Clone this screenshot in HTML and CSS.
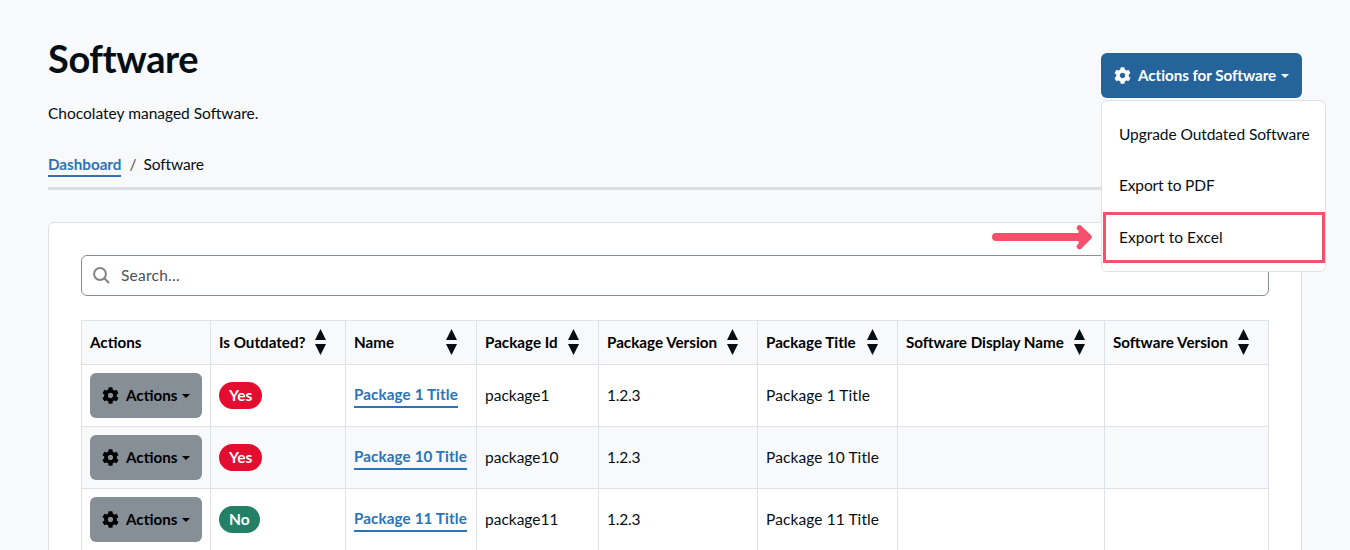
FILE: index.html
```html
<!DOCTYPE html>
<html lang="en">
<head>
<meta charset="utf-8">
<title>Software</title>
<link rel="stylesheet" href="styles.css">
</head>
<body>
<svg width="0" height="0" class="defs" aria-hidden="true">
  <symbol id="cog" viewBox="0 0 512 512"><path fill="currentColor" d="M487.4 315.7l-42.600-24.600c4.300-23.200 4.300-47 0-70.200l42.600-24.600c4.900-2.800 7.100-8.600 5.500-14-11.100-35.600-30-67.800-54.700-94.600-3.800-4.100-10-5.100-14.800-2.300L380.800 110c-17.900-15.400-38.500-27.300-60.800-35.100V25.800c0-5.600-3.900-10.500-9.400-11.700-36.700-8.200-74.300-7.800-109.200 0-5.500 1.200-9.400 6.100-9.400 11.700V75c-22.200 7.900-42.800 19.800-60.800 35.100L88.700 85.500c-4.900-2.800-11-1.900-14.800 2.300-24.700 26.700-43.600 58.900-54.700 94.600-1.700 5.400.6 11.200 5.500 14L67.300 221c-4.300 23.200-4.300 47 0 70.200l-42.600 24.600c-4.900 2.800-7.100 8.600-5.500 14 11.100 35.600 30 67.800 54.700 94.600 3.800 4.100 10 5.100 14.800 2.300l42.600-24.600c17.900 15.400 38.500 27.300 60.800 35.100v49.200c0 5.600 3.900 10.500 9.400 11.700 36.700 8.200 74.300 7.800 109.200 0 5.500-1.200 9.400-6.100 9.400-11.700v-49.200c22.200-7.900 42.800-19.800 60.800-35.100l42.600 24.600c4.900 2.800 11 1.900 14.800-2.300 24.700-26.700 43.600-58.900 54.700-94.600 1.500-5.500-.7-11.300-5.600-14.100zM256 336c-44.100 0-80-35.900-80-80s35.900-80 80-80 80 35.900 80 80-35.900 80-80 80z"/></symbol>
  <symbol id="sort" viewBox="0 0 11 26"><path d="M5.500 0 11 11H0zM0 15h11L5.500 26z" fill="#050e14"/></symbol>
</svg>
<main class="page">
  <header class="head">
    <div>
      <h1 class="title">Software</h1>
      <p class="lead">Chocolatey managed Software.</p>
    </div>
    <div class="dropdown">
      <button class="btn btn-primary"><svg class="cog"><use href="#cog"/></svg><span class="btn-label">Actions for Software</span><span class="caret"></span></button>
      <ul class="menu">
        <li class="item upgrade">Upgrade Outdated Software</li>
        <li class="item pdf">Export to PDF</li>
        <li class="item excel">Export to Excel</li>
      </ul>
      <svg class="arrow" viewBox="0 0 100 26"><path d="M4 13H94" stroke-width="8"/><path d="M87.500 4 97 13 87.500 22.500" stroke-width="5.500"/><path d="M88 8 95 13 88 18z" stroke-width="3" class="tip"/></svg>
    </div>
  </header>
  <nav class="crumbs"><a class="link" href="#">Dashboard</a><span class="slash">/</span><span class="here">Software</span></nav>
  <section class="card">
    <div class="search"><svg class="glass" viewBox="0 0 17 17"><circle cx="7" cy="7" r="5.900"/><path d="M11.300 11.300 16 16"/></svg><span class="hint">Search...</span></div>
    <table class="grid">
      <colgroup><col class="c1"><col class="c2"><col class="c3"><col class="c4"><col class="c5"><col class="c6"><col class="c7"><col class="c8"></colgroup>
      <thead><tr>
        <th>Actions</th>
        <th><div class="th">Is Outdated?<svg class="sort"><use href="#sort"/></svg></div></th>
        <th><div class="th">Name<svg class="sort"><use href="#sort"/></svg></div></th>
        <th><div class="th">Package Id<svg class="sort"><use href="#sort"/></svg></div></th>
        <th><div class="th">Package Version<svg class="sort"><use href="#sort"/></svg></div></th>
        <th><div class="th">Package Title<svg class="sort"><use href="#sort"/></svg></div></th>
        <th><div class="th">Software Display Name<svg class="sort"><use href="#sort"/></svg></div></th>
        <th><div class="th">Software Version<svg class="sort"><use href="#sort"/></svg></div></th>
      </tr></thead>
      <tbody>
        <tr><td><button class="btn btn-grey"><svg class="cog"><use href="#cog"/></svg><span class="btn-label">Actions</span><span class="caret"></span></button></td><td><span class="badge yes">Yes</span></td><td class="txt"><a class="link pkg" href="#">Package 1 Title</a></td><td class="txt">package1</td><td class="txt ver">1.2.3</td><td class="txt name">Package 1 Title</td><td></td><td></td></tr>
        <tr><td><button class="btn btn-grey"><svg class="cog"><use href="#cog"/></svg><span class="btn-label">Actions</span><span class="caret"></span></button></td><td><span class="badge yes">Yes</span></td><td class="txt"><a class="link pkg" href="#">Package 10 Title</a></td><td class="txt">package10</td><td class="txt ver">1.2.3</td><td class="txt name">Package 10 Title</td><td></td><td></td></tr>
        <tr><td><button class="btn btn-grey"><svg class="cog"><use href="#cog"/></svg><span class="btn-label">Actions</span><span class="caret"></span></button></td><td><span class="badge no">No</span></td><td class="txt"><a class="link pkg" href="#">Package 11 Title</a></td><td class="txt">package11</td><td class="txt ver">1.2.3</td><td class="txt name">Package 11 Title</td><td></td><td></td></tr>
      </tbody>
    </table>
  </section>
</main>
</body>
</html>
```
FILE: styles.css
```css
* { box-sizing: border-box; }
body { margin: 0; background: #f8f9fb; color: #050e14; font: 15.5px/24px Lato, "Noto Sans", sans-serif; }
.defs { position: absolute; }
.page { height: 550px; overflow: hidden; padding: 34px 48px 0; }
.head { display: flex; justify-content: space-between; height: 118px; }
.title { margin: 0; font-size: 38px; line-height: 48px; font-weight: 700; letter-spacing: -0.4px; }
.lead { margin: 19px 0 0; }
.dropdown { position: relative; width: 201px; padding-top: 19px; }
.btn { display: flex; align-items: center; height: 45px; border: 0; border-radius: 6px; font: 700 15.2px/24px Lato, "Noto Sans", sans-serif; white-space: nowrap; }
.btn-label { padding-bottom: 2px; }
.btn-primary { width: 201px; padding: 0 13px; background: #25639b; color: #fff; letter-spacing: -0.05px; }
.btn-grey { width: 112px; padding: 0 12px; background: #868e96; color: #000; }
.cog { width: 17px; height: 17px; margin-right: 7px; flex: none; }
.caret { margin-left: auto; border: 4px solid transparent; border-top-color: currentColor; border-bottom: 0; }
.menu { position: absolute; z-index: 2; top: 66px; left: 0; width: 225px; height: 172px; margin: 0; padding: 9px 0 0; list-style: none; background: #fff; border: 1px solid #dee2e6; border-radius: 6px; }
.item { height: 51px; margin: 0 0 0 1px; padding: 12px 0 0 16px; white-space: nowrap; }
.upgrade { letter-spacing: -0.07px; }
.pdf { letter-spacing: -0.15px; }
.excel { width: 222px; border: 3px solid #f5516c; padding: 10px 0 0 13px; letter-spacing: 0.05px; }
.arrow { position: absolute; top: 190px; left: -109px; width: 100px; height: 26px; z-index: 2; fill: none; stroke: #f5516c; stroke-linecap: round; stroke-linejoin: round; }
.tip { fill: #f5516c; }
.crumbs { display: flex; height: 38px; border-bottom: 3px solid #dcdee1; }
.link { color: #2a74b8; font-size: 15.2px; font-weight: 700; text-decoration: none; border-bottom: 2px solid #2a74b8; height: 25px; line-height: 24px; }
.slash { margin: 0 7px 0 8px; color: #4a5056; }
.here { letter-spacing: -0.1px; }
.card { height: 400px; margin-top: 32px; padding: 32px; background: #fff; border: 1px solid #dee2e6; border-radius: 6px; }
.search { display: flex; align-items: center; height: 41px; margin-bottom: 24px; padding-left: 11px; border: 1px solid #868e96; border-radius: 6px; color: #495057; letter-spacing: 0.25px; }
.hint { padding-bottom: 2px; }
.glass { width: 17px; height: 17px; margin-right: 11px; fill: none; stroke: #808488; stroke-width: 2; }
.grid { width: 1188px; table-layout: fixed; border-collapse: collapse; }
.c1 { width: 129px; } .c2 { width: 135px; } .c3 { width: 131px; } .c4 { width: 122px; }
.c5 { width: 159px; } .c6 { width: 140px; } .c7 { width: 207px; } .c8 { width: 164px; }
.grid th, .grid td { padding: 0 8px; border: 1px solid #dee2e6; text-align: left; white-space: nowrap; vertical-align: middle; }
.grid th { height: 44px; padding-bottom: 2px; background: #f8f9fb; color: #000; font-size: 15.2px; }
.grid td { height: 62px; }
.grid .txt { padding-bottom: 2px; }
.grid tbody tr:nth-child(even) { background: #f8f9fb; }
.th { display: flex; align-items: center; justify-content: space-between; padding-right: 11px; }
.sort { width: 11px; height: 26px; flex: none; }
.badge { display: inline-block; height: 27px; padding: 0 10px; border-radius: 14px; color: #fff; font-weight: 700; line-height: 27px; }
.yes { background: #e30d30; } .no { background: #237f66; }
.pkg { display: inline-block; height: 26px; letter-spacing: 0.12px; }
.ver { letter-spacing: -0.2px; }
.name { letter-spacing: 0.1px; }
```
